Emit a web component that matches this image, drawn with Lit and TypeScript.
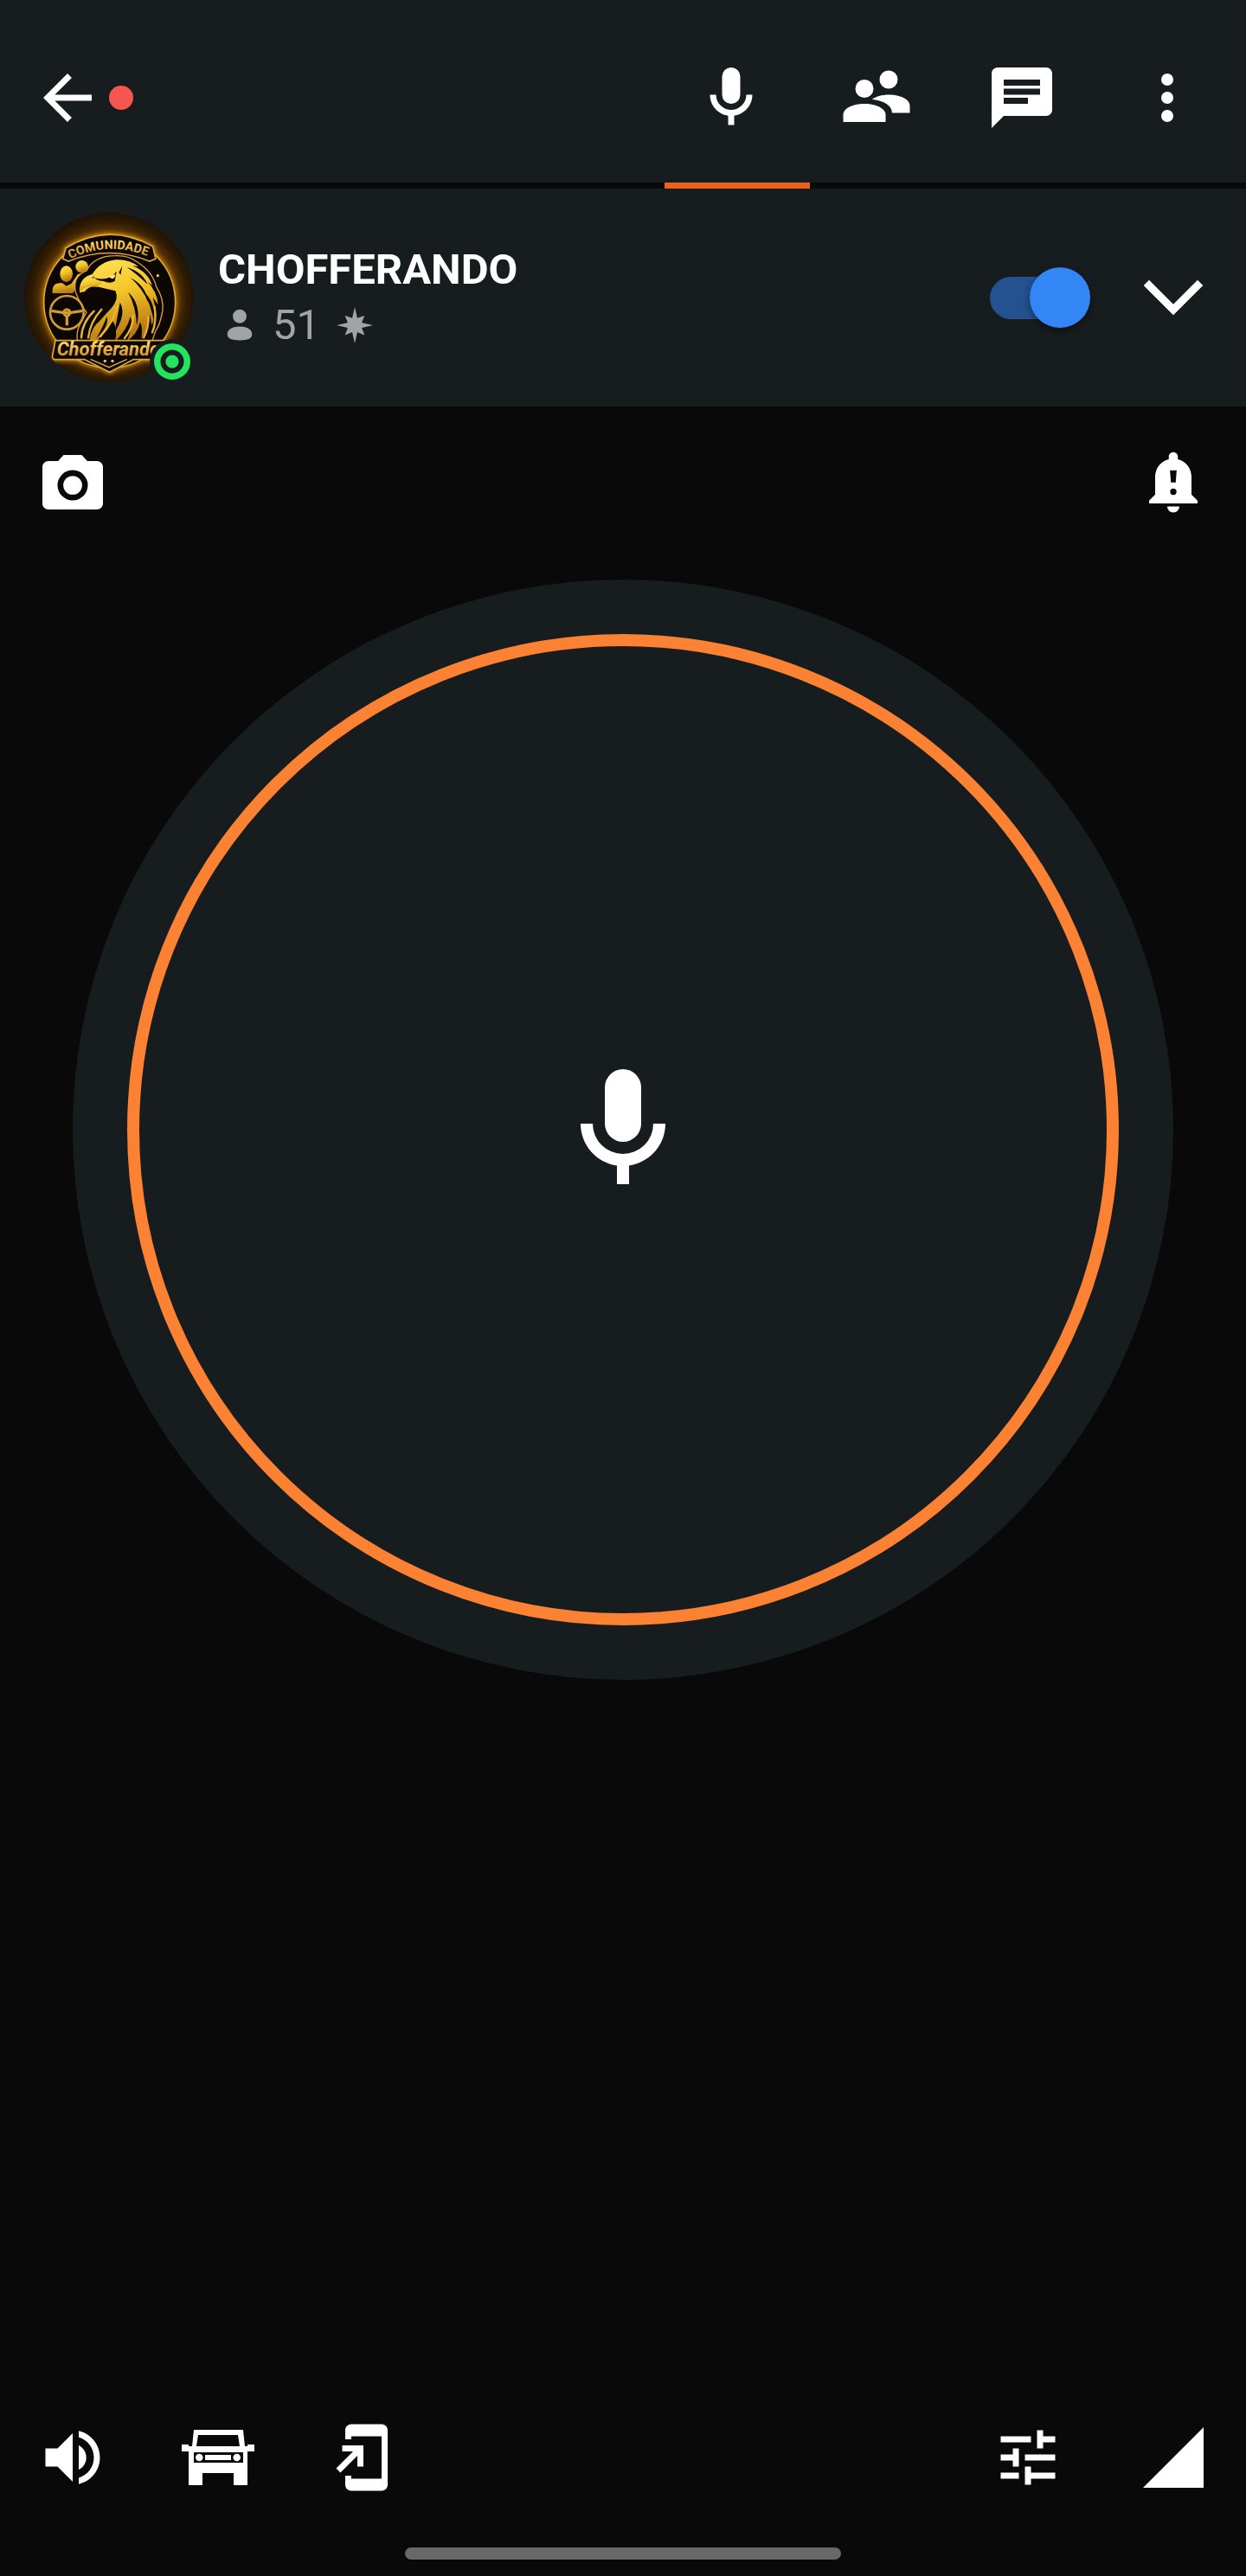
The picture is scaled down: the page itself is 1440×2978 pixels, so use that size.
import { LitElement, html, css, svg } from "lit";
import { customElement, property, state } from 'lit/decorators.js';

const icons: Record<string, any> = {
    back: svg`<path d="M20 11H7.83l5.59-5.59L12 4l-8 8 8 8 1.41-1.41L7.83 13H20z"/>`,
    mic: svg`<path d="M12 2a3 3 0 0 1 3 3v6a3 3 0 0 1-6 0V5a3 3 0 0 1 3-3zM19 11c0 3.53-2.61 6.44-6 6.93V21h-2v-3.07C7.61 17.44 5 14.53 5 11h2a5 5 0 0 0 10 0z"/>`,
    people: svg`
        <circle cx="8" cy="9" r="3"/>
        <circle cx="16" cy="6" r="3"/>
        <path d="M8 14c-4 0-7 1.6-7 3.6V20h14v-2.4C15 15.6 12 14 8 14z"/>
        <path d="M16 11c-2.2 0-4.2.6-5.5 1.5 4 .6 6.6 2 6.6 4.5H23v-2.4C23 12.6 20 11 16 11z"/>`,
    chat: svg`<path d="M20 2H4c-1.1 0-1.99.9-1.99 2L2 22l4-4h14c1.1 0 2-.9 2-2V4c0-1.1-.9-2-2-2zM6 6h12v2H6zm0 3h12v2H6zm8 5H6v-2h8z"/>`,
    more: svg`<circle cx="12" cy="6" r="2"/><circle cx="12" cy="12" r="2"/><circle cx="12" cy="18" r="2"/>`,
    camera: svg`<path fill-rule="evenodd" d="M9 2 7.17 4H4c-1.1 0-2 .9-2 2v12c0 1.1.9 2 2 2h16c1.1 0 2-.9 2-2V6c0-1.1-.9-2-2-2h-3.17L15 2zM12 7a5 5 0 1 0 0 10 5 5 0 0 0 0-10z"/><circle cx="12" cy="12" r="3.1"/>`,
    alert: svg`<path fill-rule="evenodd" d="M12 1.1c-.83 0-1.5.67-1.5 1.5v.8C7.85 4 6 6.4 6 9.2v5.9l-2 2V18h16v-.9l-2-2V9.2c0-2.8-1.85-5.2-4.5-5.8v-.8c0-.83-.67-1.5-1.5-1.5zM10.9 7.1h2.2l-.3 4h-1.6zM12 13.1a1.05 1.05 0 1 0 0 2.1 1.05 1.05 0 0 0 0-2.1z"/><path d="M10 19h4a2 2 0 0 1-4 0z"/>`,
    volume: svg`<path d="M3 9v6h4l5 5V4L7 9zM16.5 12c0-1.77-1.02-3.29-2.5-4.03v8.05c1.48-.73 2.5-2.25 2.5-4.02zM14 3.23v2.06c2.89.86 5 3.54 5 6.71s-2.11 5.85-5 6.71v2.06c4.01-.91 7-4.49 7-8.77s-2.99-7.86-7-8.77z"/>`,
    car: svg`<g transform="scale(.2857)"><path fill-rule="evenodd" d="M14 10h57l2 19h3v-2h8v8h-8v39H60V60H24v14H8V35H0v-8h8v2h4zM19 16l-2 13h50l-2-13zM14 36v12h57V36z"/><circle cx="20.3" cy="42" r="4.3"/><circle cx="63.7" cy="42" r="4.3"/><path d="M27 39h30v6H27z"/></g>`,
    phone: svg`<path d="M18 1.01 8 1c-1.1 0-2 .9-2 2v3h2V5h10v14H8v-1H6v3c0 1.1.9 2 2 2h10c1.1 0 2-.9 2-2V3c0-1.1-.9-1.99-2-1.99zM10 15h2V8H5v2h3.59L3 15.59 4.41 17 10 11.41z"/>`,
    tune: svg`<path d="M3 17v2h6v-2zM3 5v2h10V5zm10 16v-2h8v-2h-8v-2h-2v6zM7 9v2H3v2h4v2h2V9zm14 4v-2H11v2zm-6-4h2V7h4V5h-4V3h-2z"/>`,
    signal: svg`<path d="M2 22h20V2z"/>`,
    chevron: svg`<path d="m4 6.2 8 8 8-8L21.8 8 12 17.8 2.2 8z"/>`,
    person: svg`<circle cx="12" cy="5.5" r="5"/><path d="M12 13c-5 0-9 2-9 5.5S6.5 23 12 23s9-1 9-4.5S17 13 12 13z"/>`,
    star: svg`<path d="m12 0 1.7 7.3 4.8-1.8-1.9 4.8L24 12l-7.4 1.7 1.9 4.8-4.8-1.9L12 24l-1.7-7.4-4.8 1.9 1.9-4.8L0 12l7.4-1.7-1.9-4.8 4.8 1.8z"/>`,
};

const icon = (name: string) => html`<svg class="icon" viewBox="0 0 24 24" aria-hidden="true">${icons[name]}</svg>`;

@customElement('channel-logo')
export class ChannelLogo extends LitElement {

    static styles = [
        css`
            :host {
                display: block;
                border-radius: 50%;
                overflow: hidden;
            }
            .logo {
                display: block;
                width: 100%;
                height: 100%;
                font-family: Roboto, sans-serif;
                font-weight: 700;
            }
            .arc-text {
                font-size: 43px;
            }
            .name-text {
                font-size: 66px;
                font-style: italic;
            }
        `
    ];

    render(){
        return html`
        <svg class="logo" viewBox="84 75 588 588" role="img" aria-label="Comunidade Chofferando">
            <defs>
                <radialGradient id="back" gradientUnits="userSpaceOnUse" cx="380" cy="375" r="298">
                    <stop offset=".7" stop-color="#8c5606"/>
                    <stop offset=".8" stop-color="#553204"/>
                    <stop offset=".9" stop-color="#301c04"/>
                    <stop offset="1" stop-color="#1f1204"/>
                </radialGradient>
                <linearGradient id="gold" x1="0" y1="0" x2=".3" y2="1">
                    <stop offset="0" stop-color="#ffe65a"/>
                    <stop offset=".5" stop-color="#f3c42a"/>
                    <stop offset="1" stop-color="#b87812"/>
                </linearGradient>
                <linearGradient id="letters" x1="0" y1="0" x2="0" y2="1">
                    <stop offset=".2" stop-color="#ffd860"/>
                    <stop offset="1" stop-color="#c07a1c"/>
                </linearGradient>
                <filter id="glow" x="-20%" y="-20%" width="140%" height="140%">
                    <feGaussianBlur stdDeviation="8"/>
                </filter>
                <path id="arc" d="M244 236Q380 166 530 233"/>
            </defs>
            <rect x="84" y="75" width="588" height="588" fill="url(#back)"/>
            <g fill="none" stroke="#c9820e" stroke-width="12" filter="url(#glow)">
                <circle cx="380" cy="385" r="228"/>
                <path d="M218 235l10-38Q380 106 530 192l10 43M182 584h120l78 44 78-44h120"/>
            </g>
            <circle cx="380" cy="385" r="228" fill="#0d0703" stroke="#e0a838" stroke-width="5"/>

            <!-- passengers -->
            <g fill="url(#gold)">
                <circle cx="284" cy="262" r="22"/>
                <ellipse cx="230" cy="287" rx="22" ry="28"/>
                <path d="M182 354q-4-40 34-35l14 10 18-9 22-32q26-8 34-2l-52 68z"/>
            </g>

            <!-- eagle -->
            <path fill="#0d0703" stroke="#dda33a" stroke-width="4" d="M262 350q-12-54 38-74 26-52 100-52 46-2 76 22 54 34 66 86 26 40 22 82-10 52-24 70l-14 40H270q-8-30 6-60l24-44-20-28z"/>
            <path fill="url(#gold)" d="M276 352q-4-52 44-64 26-44 82-50 48-2 78 24l-22-4q56 22 70 70l-18-16q36 38 38 82l-18-26q18 54-4 98l-6-40q0 50-30 86 6-38-4-58-10 42-46 66 24-54 12-84-12 46-52 84 8-50-10-70l-54 70q-20 10-26 0 6-48 38-72l38-44q28-30 14-58l-58-14q-34-6-48 16z"/>
            <path fill="#0d0703" d="M318 340q50-8 76 18 14 26-10 50l-54 52q-16-10-8-30l16-24q-28-4-28-32 14 4 18-10-4-10-10-24z"/>
            <path fill="#0d0703" d="M326 300q50 16 78-22l-6 34q-16 10-40 0-18 0-32-12zm86-18 12-22-6 30zM308 308l20-14-8 14zM440 264q54 16 72 60-36-36-72-60zM452 300q56 30 62 86-20-50-62-86zM444 350q48 44 30 116-2-66-30-116zM416 386q24 40-20 106 12-60 20-106zM370 434q10 34-36 76 26-44 36-76zM500 350q42 40 34 104-10-56-34-104z"/>
            <path fill="#ffe878" d="M376 296l24-8q0 14-12 16z"/>
            <path fill="none" stroke="#e6b436" stroke-width="7" stroke-linecap="round" d="M352 410q-40 44-46 98M326 416q-42 40-44 92M406 400q-12 54-58 104M462 430q0 44-30 80M514 436q2 40-16 72M536 400q8 50-8 90"/>
            <path fill="url(#gold)" d="M276 350q6-40 42-50l36 18-18 14q-40-8-60 18z"/>

            <!-- steering wheel -->
            <g fill="none" stroke="#d29a34">
                <circle cx="232" cy="421" r="58" fill="#0d0703" stroke-width="8"/>
                <path stroke-width="10" d="M178 415l40 6h28l40-6M232 430v36"/>
                <circle cx="232" cy="421" r="11" stroke-width="9"/>
            </g>

            <path fill="#0d0703" stroke="#e0a838" stroke-width="5" d="M218 235l10-38Q380 106 530 192l10 43-22 8Q380 186 238 243z"/>
            <text class="arc-text" fill="url(#letters)"><textPath href="#arc">COMUNIDADE</textPath></text>
            <path fill="#0d0703" stroke="#e0a838" stroke-width="5" stroke-linejoin="round" d="M192 518h400l-16 66H462l-82 44-86-44H190q-10-2-8-14z"/>
            <path fill="none" stroke="#e0a838" stroke-width="4" d="M314 583l64 28 62-28"/>
            <circle cx="364" cy="589" r="5" fill="#f2c65c"/>
            <circle cx="390" cy="589" r="5" fill="#f2c65c"/>
            <circle cx="547" cy="293" r="5" fill="#f2c65c"/>
            <text class="name-text" x="197" y="570" fill="url(#letters)">Chofferando</text>
        </svg>
    `
    }
}

@customElement('app-root')
export class AppRoot extends LitElement {

    @property({type: String})
    channel = 'CHOFFERANDO'

    @property({type: Number})
    online = 51

    @state()
    tab = 'mic'

    tabs = [
        { id: 'mic', label: 'Falar' },
        { id: 'people', label: 'Membros' },
        { id: 'chat', label: 'Mensagens' },
        { id: 'more', label: 'Mais' },
    ]

    static styles = [
        css`
            :host {
                display: flex;
                flex-direction: column;
                min-height: 100vh;
                background: #090909;
                color: #fff;
                font-family: Roboto, sans-serif;
                font-size: 49px;
                line-height: 64px;
            }
            * {
                box-sizing: border-box;
            }
            button {
                display: flex;
                align-items: center;
                justify-content: center;
                width: 168px;
                height: 168px;
                padding: 0;
                border: 0;
                background: none;
                color: inherit;
                cursor: pointer;
            }
            .icon {
                display: block;
                flex: none;
                width: 84px;
                height: 84px;
                fill: currentColor;
            }

            .top-bar {
                display: flex;
                justify-content: space-between;
                background: linear-gradient(#171c1e, #171c1e) top / 100% 211px no-repeat;
            }
            .top-bar .back {
                width: auto;
                height: 218px;
                padding: 8px 0 0 36px;
                gap: 6px;
            }
            .unread {
                width: 28px;
                height: 28px;
                border-radius: 50%;
                background: #f5564d;
            }
            .tabs {
                display: flex;
            }
            .tabs .tab {
                height: 218px;
                padding: 15px 14px 0 0;
                border-bottom: 7px solid transparent;
            }
            .tabs .tab.active {
                border-bottom-color: #ea611b;
            }

            .channel {
                display: flex;
                align-items: center;
                padding: 28px 0 28px 28px;
                background: #171c1e;
            }
            .avatar {
                position: relative;
                flex: none;
                width: 196px;
                height: 196px;
            }
            .avatar channel-logo {
                height: 100%;
            }
            .status {
                position: absolute;
                right: -1px;
                bottom: -2px;
                width: 52px;
                height: 52px;
                border: 5px solid #171c1e;
                border-radius: 50%;
                background: radial-gradient(circle, #24e35c 7px, #171c1e 8px 13px, #24e35c 14px);
            }
            .info {
                flex: 1;
                padding-left: 28px;
            }
            .name {
                margin: 0;
                font-size: 49px;
                font-weight: 700;
            }
            .meta {
                display: flex;
                align-items: center;
                gap: 19px;
                padding-left: 6px;
                color: #a1a4a5;
            }
            .meta .icon {
                width: 38px;
                height: 38px;
            }
            .meta .star {
                display: flex;
            }
            .meta .star .icon {
                width: 42px;
                height: 42px;
            }
            .switch {
                appearance: none;
                display: flex;
                align-items: center;
                width: 112px;
                height: 49px;
                margin: 0 16px 0 0;
                border-radius: 25px;
                background: #24518f;
                cursor: pointer;
            }
            .switch::before {
                content: "";
                width: 70px;
                height: 70px;
                flex: none;
                border-radius: 50%;
                background: #3486f7;
                box-shadow: 0 4px 8px rgba(0, 0, 0, 0.4);
            }
            .switch:checked::before {
                margin-left: 46px;
            }

            .actions {
                display: flex;
                justify-content: space-between;
                padding: 7px 0;
            }

            .talk-area {
                flex: 1;
                padding: 18px 84px 0;
            }
            .talk {
                width: 100%;
                height: auto;
                aspect-ratio: 1;
                padding: 63px;
                border-radius: 50%;
                background: #171c1e;
            }
            .ring {
                display: flex;
                align-items: center;
                justify-content: center;
                width: 100%;
                height: 100%;
                border: 14px solid #fb8133;
                border-radius: 50%;
            }
            .ring .icon {
                width: 168px;
                height: 168px;
            }

            .bottom-bar {
                display: flex;
            }
            .bottom-bar .spacer {
                flex: 1;
            }
            .home-bar {
                align-self: center;
                width: 35%;
                height: 14px;
                margin: 20px 0 19px;
                border-radius: 7px;
                background: #686868;
            }
        `
    ];

    render(){
        return html`
        <header class="top-bar">
            <button class="back" aria-label="Voltar">${icon('back')}<span class="unread"></span></button>
            <nav class="tabs">
                ${this.tabs.map(t => html`
                <button class="tab ${t.id === this.tab ? 'active' : ''}" aria-label=${t.label} @click=${() => this.tab = t.id}>${icon(t.id)}</button>`)}
            </nav>
        </header>

        <section class="channel">
            <div class="avatar">
                <channel-logo></channel-logo>
                <span class="status"></span>
            </div>
            <div class="info">
                <h1 class="name">${this.channel}</h1>
                <div class="meta">
                    ${icon('person')}
                    <span>${this.online}</span>
                    <span class="star">${icon('star')}</span>
                </div>
            </div>
            <input class="switch" type="checkbox" role="switch" aria-label="Canal ligado" checked>
            <button aria-label="Expandir">${icon('chevron')}</button>
        </section>

        <div class="actions">
            <button aria-label="Enviar foto">${icon('camera')}</button>
            <button aria-label="Enviar alerta">${icon('alert')}</button>
        </div>

        <main class="talk-area">
            <button class="talk" aria-label="Pressione para falar">
                <span class="ring">${icon('mic')}</span>
            </button>
        </main>

        <footer class="bottom-bar">
            <button aria-label="Volume">${icon('volume')}</button>
            <button aria-label="Modo carro">${icon('car')}</button>
            <button aria-label="Adicionar atalho">${icon('phone')}</button>
            <span class="spacer"></span>
            <button aria-label="Ajustes">${icon('tune')}</button>
            <button aria-label="Sinal">${icon('signal')}</button>
        </footer>
        <div class="home-bar"></div>
    `
    }
}

declare global {
    interface HTMLElementTagNameMap {
        'app-root' : AppRoot
        'channel-logo' : ChannelLogo
    }
}
